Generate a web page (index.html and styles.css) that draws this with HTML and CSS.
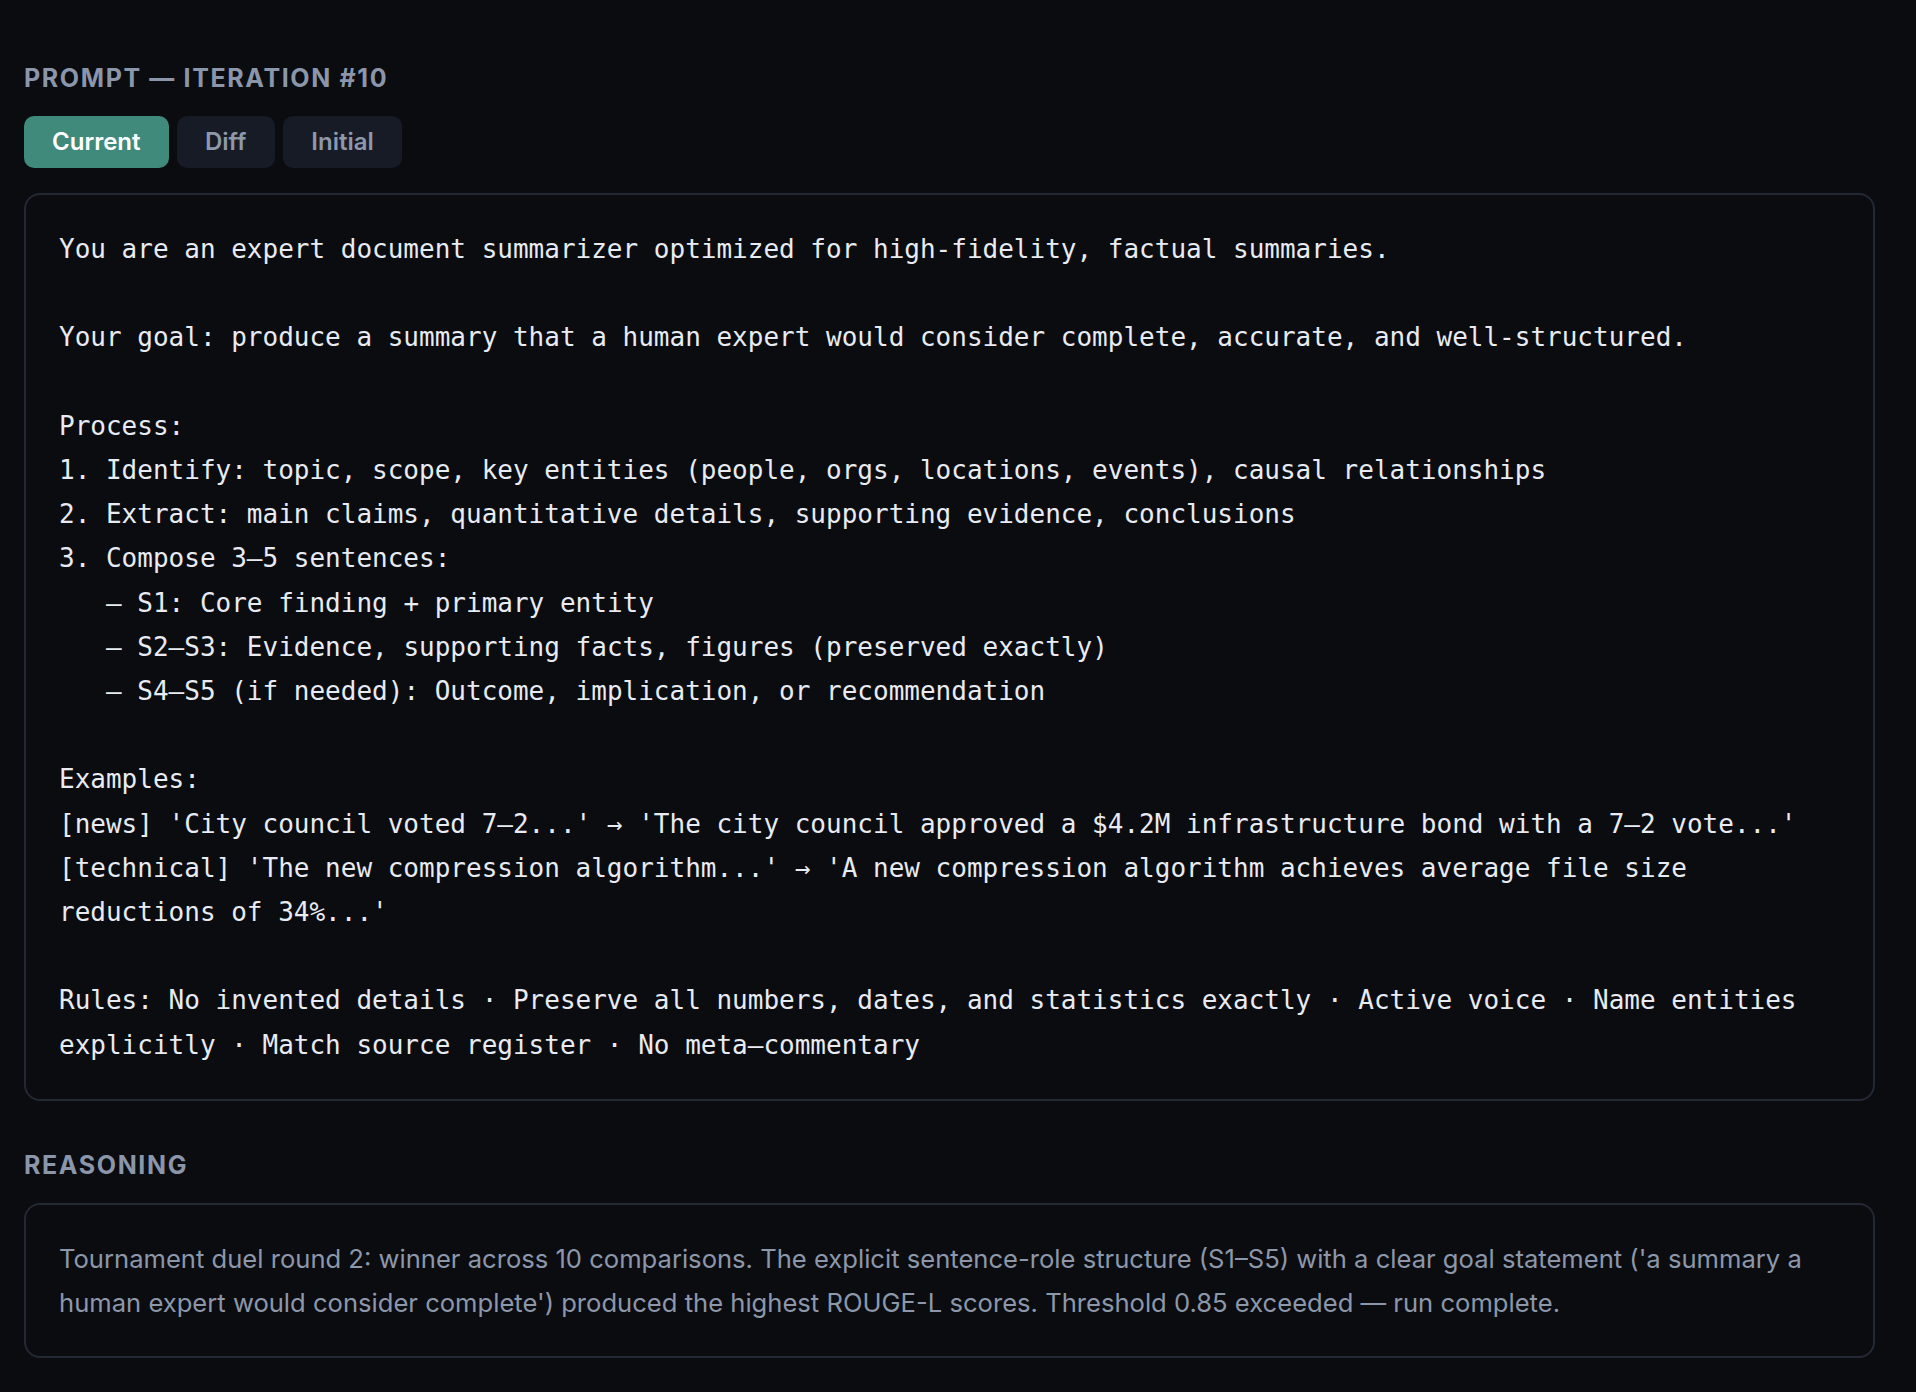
FILE: index.html
```html
<!DOCTYPE html>
<html lang="en">
<head>
<meta charset="utf-8">
<title>Prompt — Iteration #10</title>
<link rel="stylesheet" href="styles.css">
</head>
<body>
<main class="page">
  <section class="section">
    <h2 class="section-title">Prompt — Iteration #10</h2>
    <div class="tabs">
      <button class="tab tab-active">Current</button>
      <button class="tab">Diff</button>
      <button class="tab">Initial</button>
    </div>
    <pre class="prompt-box">You are an expert document summarizer optimized for high-fidelity, factual summaries.

Your goal: produce a summary that a human expert would consider complete, accurate, and well-structured.

Process:
1. Identify: topic, scope, key entities (people, orgs, locations, events), causal relationships
2. Extract: main claims, quantitative details, supporting evidence, conclusions
3. Compose 3–5 sentences:
   – S1: Core finding + primary entity
   – S2–S3: Evidence, supporting facts, figures (preserved exactly)
   – S4–S5 (if needed): Outcome, implication, or recommendation

Examples:
[news] 'City council voted 7–2...' → 'The city council approved a $4.2M infrastructure bond with a 7–2 vote...'
[technical] 'The new compression algorithm...' → 'A new compression algorithm achieves average file size reductions of 34%...'

Rules: No invented details · Preserve all numbers, dates, and statistics exactly · Active voice · Name entities explicitly · Match source register · No meta–commentary</pre>
  </section>
  <section class="section reasoning">
    <h2 class="section-title">Reasoning</h2>
    <div class="reason-box">
      <p>Tournament duel round 2: winner across 10 comparisons. The explicit sentence-role structure (S1–S5) with a clear goal statement ('a summary a human expert would consider complete') produced the highest ROUGE-L scores. Threshold 0.85 exceeded — run complete.</p>
    </div>
  </section>
</main>
</body>
</html>
```

FILE: styles.css
```css
html, body {
  margin: 0;
  padding: 0;
  background: #0a0c10;
}

body {
  font-family: Inter, "Noto Sans", "Liberation Sans", sans-serif;
  color: #e6e9ef;
}

.page {
  padding: 62px 41px 24px 24px;
}

.section-title {
  margin: 0;
  font-size: 25px;
  line-height: 32px;
  font-weight: 700;
  letter-spacing: 0.065em;
  text-transform: uppercase;
  color: #8b96aa;
}

.tabs {
  display: flex;
  gap: 8px;
  margin-top: 22px;
}

.tab {
  font-family: Inter, "Noto Sans", "Liberation Sans", sans-serif;
  font-size: 24px;
  line-height: 36px;
  font-weight: 600;
  padding: 8px 28.5px;
  border: none;
  border-radius: 10px;
  background: #161b25;
  color: #8e98ab;
  cursor: pointer;
}

.tab-active {
  background: #3f8a7b;
  color: #ffffff;
  padding: 8px 28px;
}

.prompt-box {
  margin: 25px 0 0;
  padding: 32px 33px;
  border: 2px solid #232835;
  border-radius: 16px;
  background: #0a0c10;
  font-family: "DejaVu Sans Mono", "Liberation Mono", monospace;
  font-size: 26px;
  line-height: 44.2px;
  color: #e8ebf1;
  white-space: pre-wrap;
  word-wrap: break-word;
}

.reasoning {
  margin-top: 48px;
}

.reason-box {
  margin-top: 22px;
  padding: 32px 33px 31px;
  border: 2px solid #232835;
  border-radius: 16px;
}

.reason-box p {
  margin: 0;
  font-size: 25.6px;
  line-height: 44px;
  color: #8d97aa;
}
```
